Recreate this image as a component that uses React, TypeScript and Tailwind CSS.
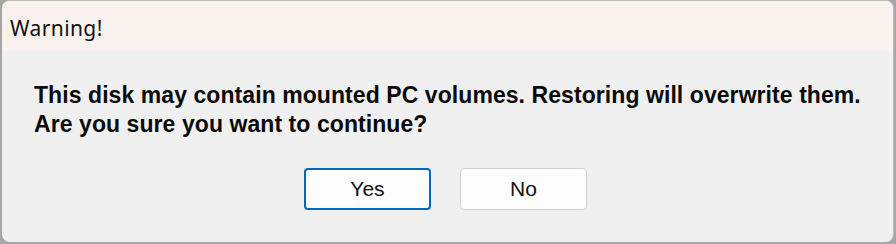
export default function App() {
  return (
    <div className="w-[896px] h-[244px] bg-[#a6a6a6] overflow-hidden">
      <div className="ml-[2px] w-[892px] h-[242px] rounded-[8px] border border-[#bdbdbd] border-b-0 border-l-0 bg-[#f0f0f0] overflow-hidden flex flex-col">
        <div className="h-[50px] bg-[#f9f1ee] flex items-center pl-[8px] pt-[5px] text-[21px] tracking-[0.4px] text-[#111] [font-family:'Noto_Sans','Open_Sans',sans-serif]">
          Warning!
        </div>
        <div className="flex flex-col pl-[32px] pt-[30px] [font-family:'Liberation_Sans',Arial,sans-serif] font-bold text-[23px] leading-[29px] tracking-[0.07px] text-[#0a0a0a]">
          <p>This disk may contain mounted PC volumes. Restoring will overwrite them.</p>
          <p>Are you sure you want to continue?</p>
        </div>
        <div className="flex justify-center gap-[29px] pt-[29px] pr-[4px] [font-family:'Liberation_Sans',Arial,sans-serif] text-[21px] text-[#111]">
          <button className="w-[127px] h-[42px] rounded-[4px] border-2 border-[#0067c0] bg-[#fdfdfd] flex items-center justify-center">
            Yes
          </button>
          <button className="w-[127px] h-[42px] rounded-[4px] border border-[#d0d0d0] bg-[#fdfdfd] flex items-center justify-center">
            No
          </button>
        </div>
      </div>
    </div>
  );
}
